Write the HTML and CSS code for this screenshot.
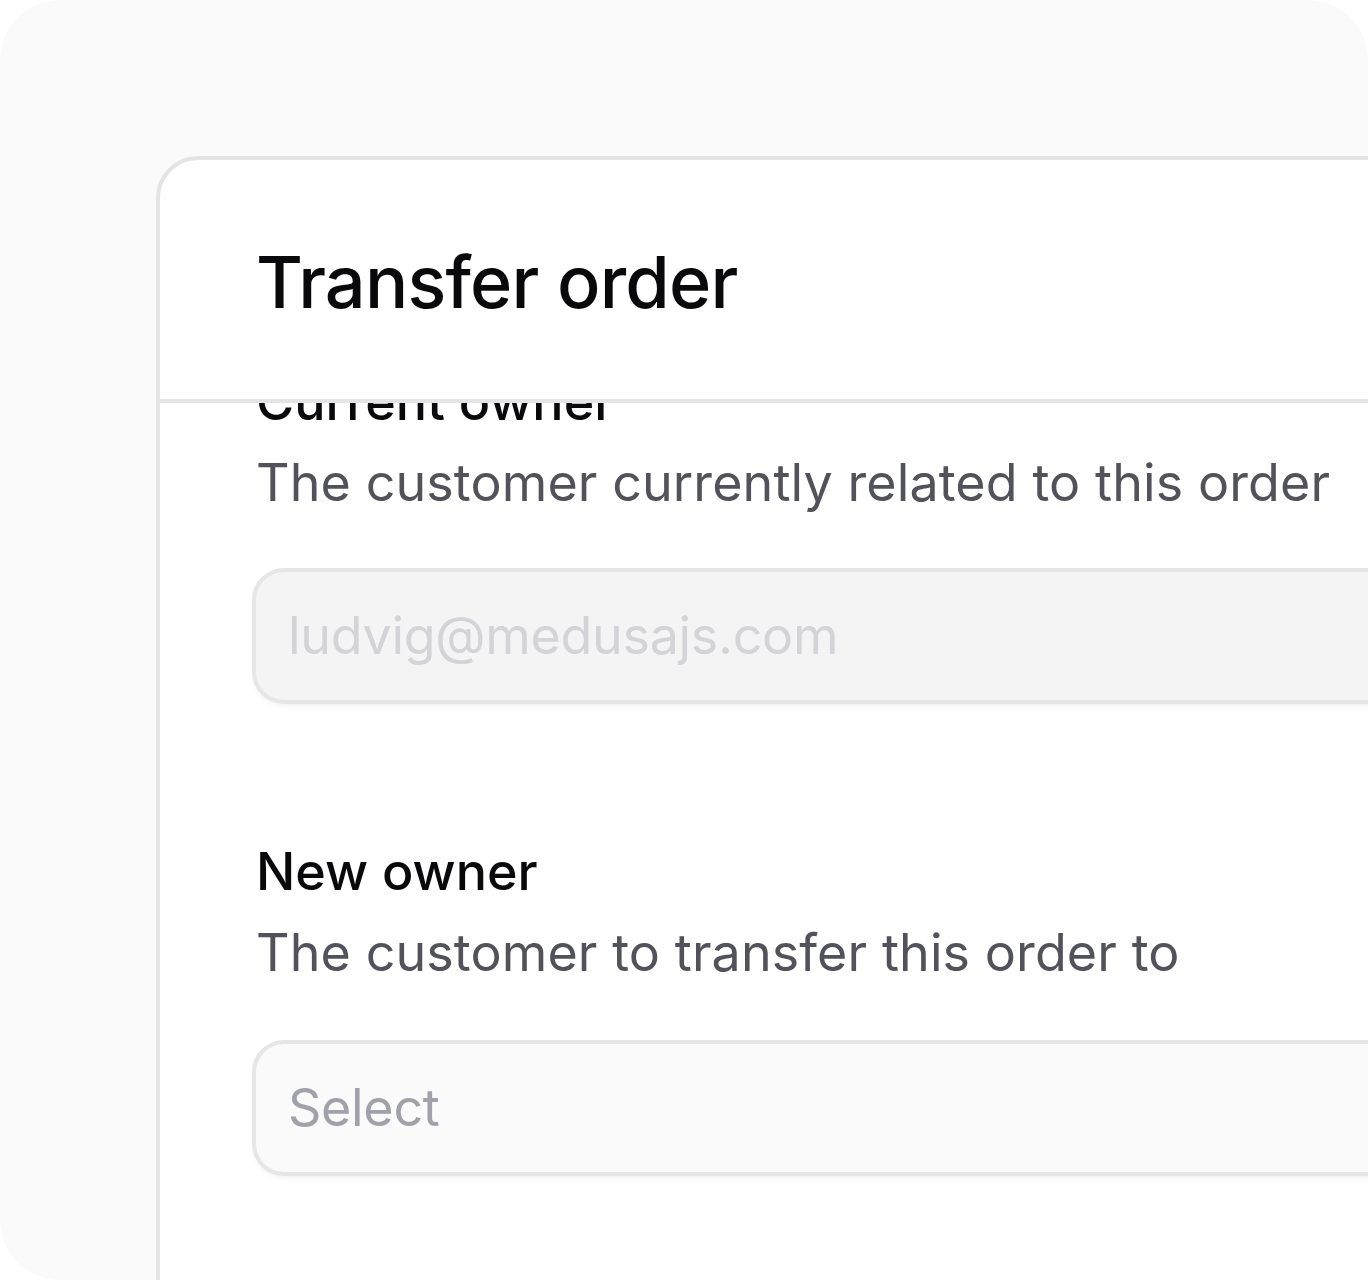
FILE: index.html
```html
<!DOCTYPE html>
<html lang="en">
<head>
<meta charset="utf-8">
<title>Transfer order</title>
<link rel="stylesheet" href="styles.css">
</head>
<body>
<div class="frame">
  <div class="card">
    <header class="card-header">
      <h2 class="title">Transfer order</h2>
    </header>
    <div class="card-body">
      <div class="body-inner">
        <div class="field">
          <div class="label">Current owner</div>
          <div class="hint">The customer currently related to this order</div>
          <div class="input input-disabled">ludvig@medusajs.com</div>
        </div>
        <div class="field field-second">
          <div class="label">New owner</div>
          <div class="hint">The customer to transfer this order to</div>
          <div class="input input-select">Select</div>
        </div>
      </div>
    </div>
  </div>
</div>
</body>
</html>
```

FILE: styles.css
```css
html, body {
  margin: 0;
  padding: 0;
  background: #ffffff;
}
body {
  font-family: Inter, "Noto Sans", sans-serif;
  -webkit-font-smoothing: antialiased;
}
.frame {
  width: 1368px;
  height: 1280px;
  background: #fafafa;
  border-radius: 60px;
  overflow: hidden;
  box-sizing: border-box;
  padding: 156px 0 0 156px;
}
.card {
  width: 1400px;
  height: 1300px;
  background: #ffffff;
  border: 4px solid #e4e4e7;
  border-radius: 42px;
  display: flex;
  flex-direction: column;
  overflow: hidden;
}
.card-header {
  flex: 0 0 auto;
  height: 243px;
  box-sizing: border-box;
  padding: 66px 96px 0;
  border-bottom: 4px solid #e4e4e7;
}
.title {
  margin: 0;
  font-size: 72px;
  line-height: 112px;
  font-weight: 500;
  color: #09090b;
  letter-spacing: -0.8px;
}
.card-body {
  flex: 1 1 auto;
  overflow: hidden;
}
.body-inner {
  margin-top: -43px;
  padding: 0 96px;
  display: flex;
  flex-direction: column;
}
.field {
  display: flex;
  flex-direction: column;
}
.field-second {
  margin-top: 130px;
}
.label {
  font-size: 52px;
  line-height: 83px;
  font-weight: 500;
  color: #09090b;
}
.hint {
  font-size: 52px;
  line-height: 80px;
  font-weight: 400;
  color: #52525b;
  letter-spacing: 0.1px;
}
.input {
  margin-top: 49px;
  height: 128px;
  box-sizing: border-box;
  border-radius: 28px;
  padding: 0 32px;
  display: flex;
  align-items: center;
  font-size: 52px;
  line-height: 80px;
  letter-spacing: -0.3px;
  box-shadow: 0 0 0 4px #e6e6e8, 0 4px 8px rgba(0, 0, 0, 0.08);
}
.input-disabled {
  background: #f4f4f5;
  color: #d4d4d8;
}
.input-select {
  margin-top: 51px;
  background: #fafafa;
  color: #a1a1aa;
}
```
